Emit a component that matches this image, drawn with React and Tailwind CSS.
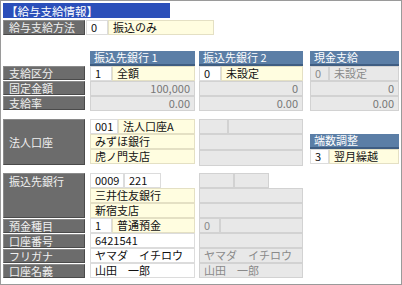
import React from "react";

const F = { fontFamily: '"Noto Sans CJK JP", "Noto Sans", sans-serif' };

function Label({ children, h = "h-[14px]", center = false }) {
  return (
    <div
      className={`${h} w-[82px] bg-[#6c6c6c] border border-[#4a4a4a] border-t-[#8a8a8a] border-l-[#8a8a8a] text-[#f0f0f0] text-[11px] leading-[11px] pl-[5px] flex overflow-hidden ${center ? "items-center" : "items-start pt-[2px]"}`}
    >
      {children}
    </div>
  );
}

function Cell({ w, kind = "white", align = "left", h = "h-[15px]", children, extra = "" }) {
  const k =
    kind === "white"
      ? "bg-white border-[#dcdcdc] text-[#111]"
      : kind === "yellow"
      ? "bg-[#fffde0] border-[#e4e0c4] text-[#111]"
      : "bg-[#e8e8e8] border-[#d2d2d2] text-[#8a8a8a]";
  return (
    <div
      className={`${w} ${h} ${k} border shrink-0 text-[11px] leading-[11px] overflow-hidden flex items-center ${align === "right" ? "justify-end pr-[4px]" : "pl-[4px]"} ${extra}`}
    >
      {children}
    </div>
  );
}

function Header({ w, children }) {
  return (
    <div
      className={`${w} h-[15px] bg-[#5b7ea6] border-b-2 border-[#3f5d82] text-white text-[11px] leading-[11px] pl-[4px] flex items-center shrink-0`}
    >
      {children}
    </div>
  );
}

export default function App() {
  return (
    <div
      style={F}
      className="w-[402px] h-[285px] border border-[#9a9a9a] bg-white pl-[2px] pt-[2px] overflow-hidden"
    >
      <div className="w-[167px] h-[15px] bg-[#2b4fba] text-white text-[11.5px] leading-[12px] flex items-center pl-[3px]">
        【給与支給情報】
      </div>
      <div className="flex mt-[2px] h-[15px]">
        <Label h="h-[15px]" center>給与支給方法</Label>
        <Cell w="w-[22px] ml-[1px]">0</Cell>
        <Cell w="w-[106px]" kind="yellow">振込のみ</Cell>
      </div>

      {/* Section A */}
      <div className="flex mt-[16px]">
        <div className="flex flex-col gap-[1px] pt-[15px]">
          <Label center>支給区分</Label>
          <Label center>固定金額</Label>
          <Label center>支給率</Label>
        </div>
        <div className="flex flex-col ml-[5px] w-[105px]">
          <Header w="w-[105px]">振込先銀行 1</Header>
          <div className="flex">
            <Cell w="w-[22px]">1</Cell>
            <Cell w="w-[83px]" kind="yellow">全額</Cell>
          </div>
          <Cell w="w-[105px]" kind="gray" align="right" extra="text-[#777]">100,000</Cell>
          <Cell w="w-[105px]" kind="gray" align="right" extra="text-[#777]">0.00</Cell>
        </div>
        <div className="flex flex-col ml-[4px] w-[104px]">
          <Header w="w-[104px]">振込先銀行 2</Header>
          <div className="flex">
            <Cell w="w-[22px]">0</Cell>
            <Cell w="w-[82px]" kind="yellow">未設定</Cell>
          </div>
          <Cell w="w-[104px]" kind="gray" align="right" extra="text-[#777]">0</Cell>
          <Cell w="w-[104px]" kind="gray" align="right" extra="text-[#777]">0.00</Cell>
        </div>
        <div className="flex flex-col ml-[7px] w-[89px]">
          <Header w="w-[89px]">現金支給</Header>
          <div className="flex">
            <Cell w="w-[19px]" kind="gray">0</Cell>
            <Cell w="w-[70px]" kind="gray">未設定</Cell>
          </div>
          <Cell w="w-[89px]" kind="gray" align="right" extra="text-[#777]">0</Cell>
          <Cell w="w-[89px]" kind="gray" align="right" extra="text-[#777]">0.00</Cell>
        </div>
      </div>

      {/* Section B */}
      <div className="flex mt-[8px]">
        <Label h="h-[46px]" center>法人口座</Label>
        <div className="flex flex-col ml-[5px] w-[105px]">
          <div className="flex">
            <Cell w="w-[28px]">001</Cell>
            <Cell w="w-[77px]" kind="yellow">法人口座A</Cell>
          </div>
          <Cell w="w-[105px]" kind="yellow">みずほ銀行</Cell>
          <Cell w="w-[105px]" kind="yellow">虎ノ門支店</Cell>
        </div>
        <div className="flex flex-col ml-[4px] w-[104px]">
          <div className="flex">
            <Cell w="w-[29px]" kind="gray"></Cell>
            <Cell w="w-[75px]" kind="gray"></Cell>
          </div>
          <Cell w="w-[104px]" kind="gray" h="h-[16px]"></Cell>
          <Cell w="w-[104px]" kind="gray" h="h-[16px]"></Cell>
        </div>
        <div className="flex flex-col ml-[7px] w-[89px] pt-[15px]">
          <Header w="w-[89px]">端数調整</Header>
          <div className="flex">
            <Cell w="w-[19px]">3</Cell>
            <Cell w="w-[70px]" kind="yellow">翌月繰越</Cell>
          </div>
        </div>
      </div>

      {/* Section C */}
      <div className="flex mt-[7px]">
        <div className="flex flex-col gap-[1px]">
          <Label h="h-[45px]">振込先銀行</Label>
          <Label h="h-[14px]" center>預金種目</Label>
          <Label h="h-[14px]" center>口座番号</Label>
          <Label h="h-[14px]" center>フリガナ</Label>
          <Label h="h-[14px]" center>口座名義</Label>
        </div>
        <div className="flex flex-col ml-[5px] w-[105px]">
          <div className="flex">
            <Cell w="w-[34px]">0009</Cell>
            <Cell w="w-[37px]">221</Cell>
          </div>
          <Cell w="w-[105px]" kind="yellow">三井住友銀行</Cell>
          <Cell w="w-[105px]" kind="yellow">新宿支店</Cell>
          <div className="flex">
            <Cell w="w-[22px]">1</Cell>
            <Cell w="w-[83px]" kind="yellow">普通預金</Cell>
          </div>
          <Cell w="w-[105px]">6421541</Cell>
          <Cell w="w-[105px]">ヤマダ　イチロウ</Cell>
          <Cell w="w-[105px]">山田　一郎</Cell>
        </div>
        <div className="flex flex-col ml-[4px] w-[104px]">
          <div className="flex">
            <Cell w="w-[35px]" kind="gray"></Cell>
            <Cell w="w-[35px]" kind="gray"></Cell>
          </div>
          <Cell w="w-[104px]" kind="gray"></Cell>
          <Cell w="w-[104px]" kind="gray"></Cell>
          <div className="flex">
            <Cell w="w-[21px]" kind="gray">0</Cell>
            <Cell w="w-[83px]" kind="gray"></Cell>
          </div>
          <Cell w="w-[104px]" kind="gray"></Cell>
          <Cell w="w-[104px]" kind="gray">ヤマダ　イチロウ</Cell>
          <Cell w="w-[104px]" kind="gray">山田　一郎</Cell>
        </div>
      </div>
    </div>
  );
}
